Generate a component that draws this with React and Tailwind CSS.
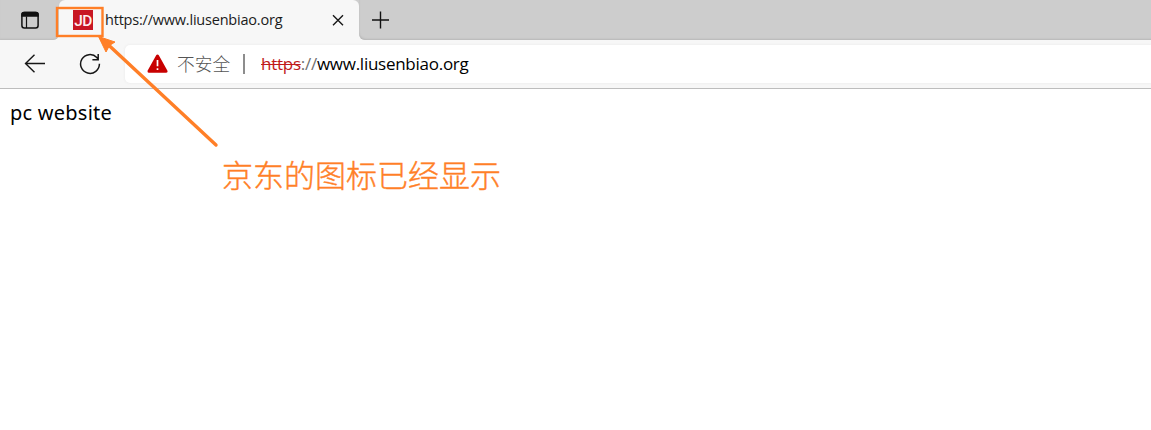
function TabStrip() {
  return (
    <div className="flex h-10 bg-[#f7f7f7]">
      <div className="flex w-[59px] items-center rounded-br-[6px] bg-[#cdcdcd] pl-[21px] shadow-[inset_0_-2px_2px_-1px_#bcbcbc]">
        <svg className="h-[18px] w-[18px]" viewBox="0 0 18 18" fill="none" stroke="#111" strokeWidth="1.5">
          <rect x="0.9" y="1.4" width="16.2" height="15.6" rx="2.5" />
          <path d="M1 4V3.5Q1 1.4 3 1.4H15Q17 1.4 17 3.5V5H1Z" fill="#111" />
          <path d="M5.5 5.5V17" strokeWidth="1.2" />
        </svg>
      </div>
      <div className="flex w-[300px] bg-[#cdcdcd]">
        <div className="flex w-full items-center rounded-t-[6px] bg-[#f7f7f7] pl-[14px]">
          <div className="flex h-5 w-5 shrink-0 items-center justify-center bg-[#c81623]">
            <span className="pt-px font-['Roboto',sans-serif] text-[15.5px] leading-5 font-medium tracking-[-0.6px] text-[#ffeeee]">JD</span>
          </div>
          <span className="ml-[12px] w-[218px] font-['Open_Sans','Noto_Sans',sans-serif] text-[14.5px] leading-5 tracking-[-0.21px] whitespace-nowrap text-[#1b1b1b]">https://www.liusenbiao.org</span>
          <svg className="ml-[9px] h-3 w-3 shrink-0" viewBox="0 0 12 12" stroke="#171717" strokeWidth="1.4">
            <path d="M1 1.3 11 11.3M11 1.3 1 11.3" />
          </svg>
        </div>
      </div>
      <div className="flex flex-1 items-center rounded-bl-[6px] bg-[#cdcdcd] pl-[12px] shadow-[inset_1px_-2px_2px_-1px_#b7b7b7]">
        <svg className="h-[19px] w-[19px]" viewBox="0 0 19 19" stroke="#111" strokeWidth="1.4">
          <path d="M1 9H18M9.5 .5V17.5" />
        </svg>
      </div>
    </div>
  );
}

function Toolbar() {
  return (
    <div className="flex h-[49px] items-center border-b border-[#bdbdbd] bg-[#f7f7f7] pl-[24px]">
      <svg className="h-5 w-[22px] shrink-0" viewBox="0 0 22 20" fill="none" stroke="#171717" strokeWidth="1.4">
        <path d="M21 9.5H1.5M10.5 .7 1.5 9.5 10.5 18.3" />
      </svg>
      <svg className="ml-[33px] h-[22px] w-[22px] shrink-0" viewBox="0 0 22 22" fill="none" stroke="#171717" strokeWidth="1.5">
        <path d="M20.4 10.8A9.4 9.4 0 1 1 17.8 4.5L19.2 6.2M19.2 1V6.7H13.4" />
      </svg>
      <div className="ml-[24px] flex h-[38px] flex-1 items-center rounded-l-[5px] bg-white pl-[22px] shadow-[0_0_3px_#e8e8e8]">
        <svg className="h-5 w-[21px] shrink-0" viewBox="0 0 21 20">
          <path d="M10.5 2 19 17.3H2Z" fill="#c80000" stroke="#c80000" strokeWidth="3" strokeLinejoin="round" />
          <path d="M10.5 6V12.3M10.5 14.2V16" stroke="white" strokeWidth="1.7" />
        </svg>
        <span className="ml-[9px] w-[54px] pb-[2px] font-['Noto_Sans_CJK_SC',sans-serif] text-[17.7px] leading-6 font-light whitespace-nowrap text-[#555555]">不安全</span>
        <span className="ml-[12px] h-5 w-[2px] bg-[#8d8d8d]" />
        <span className="ml-[16px] font-['Open_Sans','Noto_Sans',sans-serif] text-[17px] leading-6 tracking-[-0.26px] whitespace-nowrap text-black">
          <span className="text-[#c11b1b] line-through decoration-1">https</span>
          <span className="text-[#707070]">://</span>
          www.liusenbiao.org
        </span>
      </div>
    </div>
  );
}

export default function App() {
  return (
    <div className="relative h-[430px] w-full overflow-hidden bg-white">
      <TabStrip />
      <Toolbar />
      <p className="pt-[10px] pl-[10px] font-['Noto_Sans','Open_Sans',sans-serif] text-[20px] leading-[28px] tracking-[0.24px] text-black">pc website</p>
      <p className="mt-[25px] ml-[222px] font-['Noto_Sans_CJK_SC',sans-serif] text-[31px] leading-[44px] font-light text-[#ff7f27] [-webkit-text-stroke:0.4px_#ff7f27]">京东的图标已经显示</p>
      <svg className="pointer-events-none absolute inset-0 h-[430px] w-[1151px]" viewBox="0 0 1151 430" fill="none" stroke="#ff7f27">
        <rect x="57" y="8" width="45.5" height="28" strokeWidth="2.4" />
        <path d="M108 44.5 216 145" strokeWidth="3.4" strokeLinecap="round" />
        <path d="M98.5 36.5 115 42 109.5 45.5 106 52Z" fill="#ff7f27" strokeWidth="1" />
      </svg>
    </div>
  );
}
